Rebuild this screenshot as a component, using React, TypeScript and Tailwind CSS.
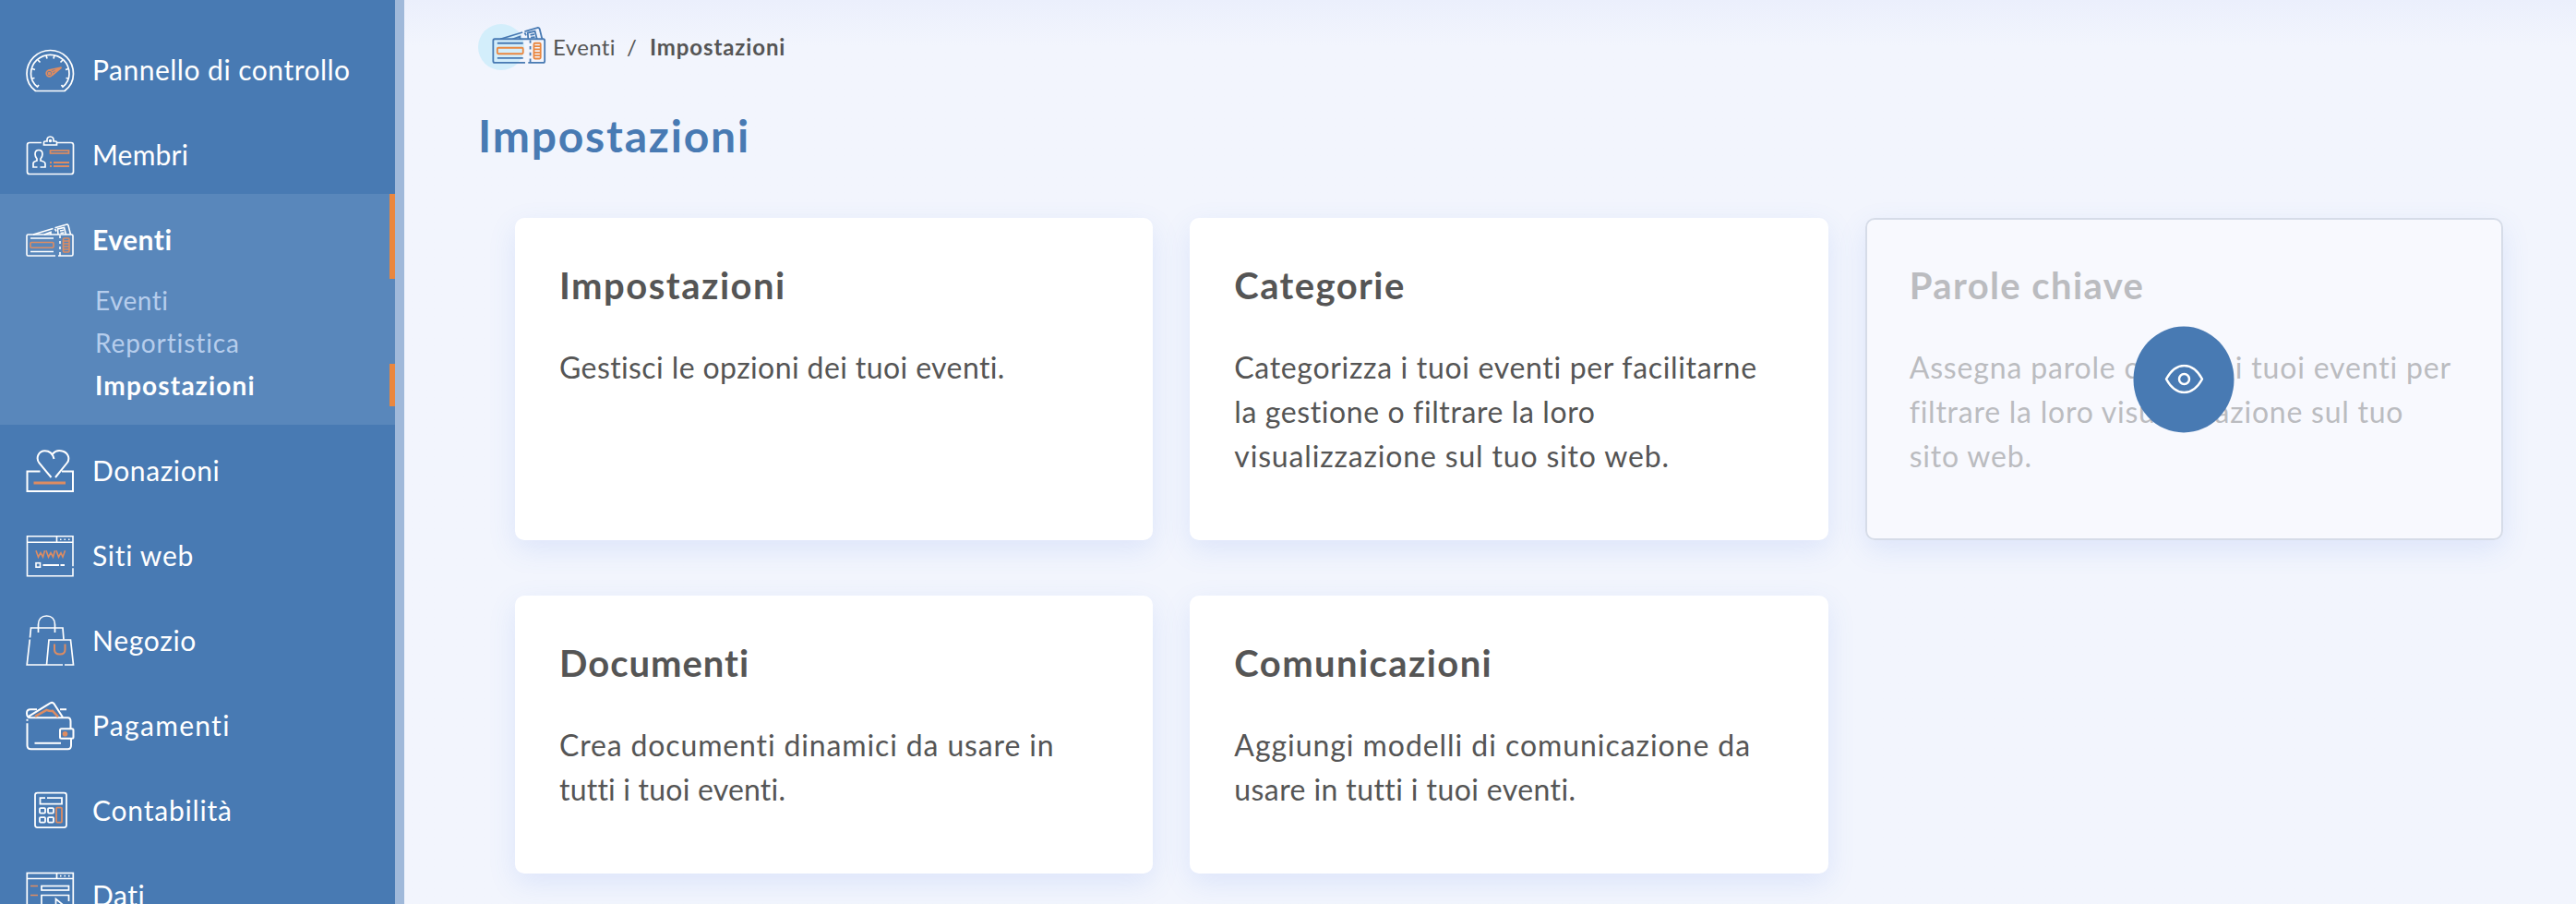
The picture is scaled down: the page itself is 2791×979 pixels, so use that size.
import React from 'react';

type IconProps = { className?: string };

type NavItem = {
  label: string;
  icon: React.FC<IconProps>;
  tracking: string;
  active?: boolean;
};

type CardLine = { text: string; tracking: string };

type CardData = {
  title: string;
  titleTracking: string;
  lines: CardLine[];
  hidden?: boolean;
};

const ORANGE = '#dd8c62';

const GaugeIcon: React.FC<IconProps> = ({ className }) => (
  <svg className={className} viewBox="0 -5 56 60" fill="none" stroke="#fff" strokeWidth="1.7">
    <path d="M10.5 51.5C4.5 47 1 40.5 1 33C1 18.5 12.5 7.5 26.5 7.5S51.5 18.5 51.5 33C51.5 40.5 48 47 42 51.5Z" />
    <path d="M14 45L12.5 47C8 43.5 5.5 38.5 5.5 33C5.5 21 15 12.3 26.5 12.3S47 21 47 33C47 38.5 44.5 43.5 40 47L38.5 45" />
    <path d="M22 13L23 16.5M31 13L30 16.5M13 18L15.5 20.5M40 18L37.5 20.5M7 27.5L10 28.5M46 27.5L43 28.5M6.5 38L9.5 37.5M46.500 38L43.5 37.5" />
    <g stroke={ORANGE}>
      <circle cx="25.5" cy="32.5" r="3.3" />
      <circle cx="25.5" cy="32.5" r="1" />
      <path d="M24.5 29L38.5 26L28.5 34.5M28 31L36 27.5" />
    </g>
  </svg>
);

const BadgeIcon: React.FC<IconProps> = ({ className }) => (
  <svg className={className} viewBox="0 -5.5 56 60" fill="none" stroke="#fff" strokeWidth="1.7">
    <path d="M17 15H4Q1.500 15 1.5 17.5V46.5Q1.500 49 4 49H49Q51.500 49 51.5 46.5V17.5Q51.500 15 49 15H34" />
    <path d="M19.5 17.5V14.5Q19.500 13.500 21 13.5H23C22.5 10 24 8.5 26.5 8.5S30.5 10 30 13.5H32Q33.500 13.500 33.5 14.5V17.5Z" />
    <circle cx="26.5" cy="13" r="0.9" />
    <path d="M12.5 41.5H8V37.5Q8 35.500 12 34.5V32.5Q10 30 10 27.5C10 24.5 11.5 23 14 23S18 24.5 18 27.5Q18 30 16 32.5V34.5Q21 35.500 21 38V41.5H15.5" />
    <g stroke={ORANGE}>
      <rect x="26.5" y="23.5" width="20" height="3" />
      <path d="M26 36.5H28M30 36.5H47M26 40.5H28M30 40.5H47" strokeWidth="2" />
    </g>
  </svg>
);

const TicketsIcon: React.FC<IconProps & { stroke?: string; accent?: string }> = ({
  className,
  stroke = '#fff',
  accent = ORANGE,
}) => (
  <svg className={className} viewBox="0 -2 56 60" fill="none" stroke={stroke} strokeWidth="1.6">
    <path d="M32 49H2.5Q1 49 1 47.5V27.5Q1 26 2.5 26H49.5Q51 26 51 27.5V47.5Q51 49 49.5 49H35" />
    <path d="M8 26L29.5 19.5M31.5 18.8L44.5 15Q45.500 15 46 16L48.5 26" />
    <path d="M20 26L27 23.5V26M31.5 20L33 22.5M35 26L34.5 20L41.5 18.5L43.5 26M37 22L41 21.3M37.5 24.5L41.5 24" />
    <path d="M5 30H30M5 44.5H30" />
    <path d="M37 27V30M37 33V36M37 39V42M37 45V49" />
    <g stroke={accent}>
      <rect x="5" y="34.5" width="25" height="5.8" rx="1" />
      <rect x="40.5" y="30" width="6.5" height="15" rx="1" />
      <path d="M40.5 33H47M40.5 36H47M40.5 39H47M40.5 42H47" />
    </g>
  </svg>
);

const DonationIcon: React.FC<IconProps> = ({ className }) => (
  <svg className={className} viewBox="0 -11.5 56 60" fill="none" stroke="#fff" strokeWidth="2">
    <path d="M15.5 23H1.5V44.5H51V23H39" />
    <path d="M27.5 29.500L14.5 14C10 7.5 14.5 0.8 20.5 0.8C25 0.8 29 3.5 30.5 9.5M29 4C32 0.5 36 0 39.5 1C45.5 2.5 48.5 9 44.5 14L32 29.5" />
    <path d="M8.5 35.5H43" stroke={ORANGE} strokeWidth="3" />
  </svg>
);

const WebsiteIcon: React.FC<IconProps> = ({ className }) => (
  <svg className={className} viewBox="0 -4.2 56 60" fill="none" stroke="#fff" strokeWidth="1.6">
    <path d="M51 41V8.5H1.5V51.5H51V43" />
    <path d="M1.5 15H51M33.5 8.5V15" />
    <path d="M37 12H38.5M41.5 12H43M46 12H47.5" />
    <rect x="11" y="37.5" width="4.5" height="4.5" />
    <path d="M18.5 39.8H36M37.5 39.8H42" strokeWidth="1.8" />
    <path
      d="M11 24L13.5 31L16 26.5L18.5 31L20.5 24M22 24L24.5 31L27 26.5L29.5 31L31.5 24M33 24L35.5 31L38 26.5L40 31L42.5 24"
      stroke={ORANGE}
    />
  </svg>
);

const BagsIcon: React.FC<IconProps> = ({ className }) => (
  <svg className={className} viewBox="0 -14.5 56 60" fill="none" stroke="#fff" strokeWidth="1.7">
    <path d="M41 18L40 5.5H5.5L4.5 16M4.3 18L1.2 45.5H40" />
    <path d="M13.5 10.500V2C13.5 -4 17 -7.5 22.5 -7.5S31.500 -4 31.500 2V10.500" />
    <path d="M42 45.5H51.5L48.5 18.5H25L22.5 45.5" />
    <path d="M31 23V29C31 32.5 33.5 34 37 34S42.5 32.5 42.5 29V23" stroke={ORANGE} strokeWidth="2" />
  </svg>
);

const WalletIcon: React.FC<IconProps> = ({ className }) => (
  <svg className={className} viewBox="0 -9.300 56 60" fill="none" stroke="#fff" strokeWidth="2">
    <path d="M49 39V46Q49 50 45.500 50H5.500Q1.500 50 1.500 46V22M1.500 19.500V17.500" />
    <path d="M12 7H5Q1 7 1 11Q1 16 5 16H45.5Q48.500 16 48.500 20V28M37 7H44" />
    <path d="M3 14.5L26.5 0Q29 -1.200 30.5 0.8L40 15.5" />
    <rect x="37" y="28" width="14.500" height="10.5" rx="1.5" />
    <path d="M9.5 43.5H38" />
    <path d="M10 14.500L22.5 7.5Q26 9 29 8.5L35 15" stroke={ORANGE} strokeWidth="2.5" />
    <circle cx="42.5" cy="33.5" r="2.8" fill={ORANGE} stroke="none" />
  </svg>
);

const CalculatorIcon: React.FC<IconProps> = ({ className }) => (
  <svg className={className} viewBox="0 -3.6 56 60" fill="none" stroke="#fff" strokeWidth="1.8">
    <rect x="10" y="11" width="34" height="37.5" rx="2.5" />
    <path d="M21 16.5H15.5V23H39V16.5H23" />
    <rect x="15" y="27.5" width="6" height="5.5" rx="1" />
    <rect x="24" y="27.5" width="6" height="5.5" rx="1" />
    <rect x="15" y="37.5" width="6" height="5.5" rx="1" />
    <rect x="24" y="37.5" width="6" height="5.5" rx="1" />
    <rect x="33" y="27" width="6" height="16" rx="1" stroke={ORANGE} />
  </svg>
);

const DataIcon: React.FC<IconProps> = ({ className }) => (
  <svg className={className} viewBox="0 -4 56 60" fill="none" stroke="#fff" strokeWidth="1.7">
    <rect x="1.3" y="5.5" width="50" height="50" />
    <path d="M1.5 11.5H51.5M33.5 5.5V11.5M37 8.700H38.5M41.5 8.7H43M46 8.7H47.5" />
    <rect x="17" y="19.5" width="29.5" height="4.5" />
    <path d="M17 50V29.5H46.5V36M32.5 46V33.5L44 43" />
    <path d="M5 19.5H13M5 29.5H13" stroke={ORANGE} />
  </svg>
);

const navItems: NavItem[] = [
  { label: 'Pannello di controllo', icon: GaugeIcon, tracking: 'tracking-[0.5px]' },
  { label: 'Membri', icon: BadgeIcon, tracking: 'tracking-[0.2px]' },
  { label: 'Eventi', icon: TicketsIcon, tracking: 'tracking-[0.5px]', active: true },
  { label: 'Donazioni', icon: DonationIcon, tracking: 'tracking-[0.6px]' },
  { label: 'Siti web', icon: WebsiteIcon, tracking: 'tracking-[0.7px]' },
  { label: 'Negozio', icon: BagsIcon, tracking: 'tracking-[0.7px]' },
  { label: 'Pagamenti', icon: WalletIcon, tracking: 'tracking-[1.3px]' },
  { label: 'Contabilità', icon: CalculatorIcon, tracking: 'tracking-[0.8px]' },
  { label: 'Dati', icon: DataIcon, tracking: 'tracking-[0.5px]' },
];

const subItems = [
  { label: 'Eventi', tracking: 'tracking-[0.5px]' },
  { label: 'Reportistica', tracking: 'tracking-[0.9px]' },
  { label: 'Impostazioni', tracking: 'tracking-[1.2px]', active: true },
];

const cards: CardData[] = [
  {
    title: 'Impostazioni',
    titleTracking: 'tracking-[1.5px]',
    lines: [{ text: 'Gestisci le opzioni dei tuoi eventi.', tracking: 'tracking-[0.4px]' }],
  },
  {
    title: 'Categorie',
    titleTracking: 'tracking-[1.4px]',
    lines: [
      { text: 'Categorizza i tuoi eventi per facilitarne', tracking: 'tracking-[0.67px]' },
      { text: 'la gestione o filtrare la loro', tracking: 'tracking-[0.6px]' },
      { text: 'visualizzazione sul tuo sito web.', tracking: 'tracking-[0.83px]' },
    ],
  },
  {
    title: 'Parole chiave',
    titleTracking: 'tracking-[1.4px]',
    hidden: true,
    lines: [
      { text: 'Assegna parole chiave ai tuoi eventi per', tracking: 'tracking-[0.83px]' },
      { text: 'filtrare la loro visualizzazione sul tuo', tracking: 'tracking-[0.76px]' },
      { text: 'sito web.', tracking: 'tracking-[0.8px]' },
    ],
  },
  {
    title: 'Documenti',
    titleTracking: 'tracking-[1px]',
    lines: [
      { text: 'Crea documenti dinamici da usare in', tracking: 'tracking-[0.86px]' },
      { text: 'tutti i tuoi eventi.', tracking: 'tracking-[0.2px]' },
    ],
  },
  {
    title: 'Comunicazioni',
    titleTracking: 'tracking-[1.4px]',
    lines: [
      { text: 'Aggiungi modelli di comunicazione da', tracking: 'tracking-[0.94px]' },
      { text: 'usare in tutti i tuoi eventi.', tracking: 'tracking-[0.4px]' },
    ],
  },
];

const Sidebar: React.FC = () => (
  <nav className="w-[438px] shrink-0 border-r-[10px] border-[#a0b9da] bg-[#487ab3] pt-[26px] text-white">
    {navItems.map((item) => {
      const Icon = item.icon;
      return (
        <div key={item.label} className={item.active ? 'bg-[#5987bb] pb-5' : ''}>
          <div className={`flex h-[92px] items-center pl-7 ${item.active ? 'border-r-[6px] border-[#ea873f]' : ''}`}>
            <Icon className="h-[60px] w-14 shrink-0 overflow-visible" />
            <span className={`ml-4 pt-1.5 text-[30px] ${item.tracking} ${item.active ? 'font-bold' : ''}`}>
              {item.label}
            </span>
          </div>
          {item.active &&
            subItems.map((sub) => (
              <div
                key={sub.label}
                className={`flex h-[46px] items-center pl-[103px] text-[28px] ${sub.tracking} ${
                  sub.active ? 'border-r-[6px] border-[#ea873f] font-bold text-white' : 'text-[#b6cdec]'
                }`}
              >
                {sub.label}
              </div>
            ))}
        </div>
      );
    })}
  </nav>
);

const Card: React.FC<{ card: CardData }> = ({ card }) => (
  <div
    className={`relative rounded-[10px] px-12 pb-[67px] shadow-[0_10px_30px_rgba(80,120,230,0.13)] ${
      card.hidden ? 'bg-[#f8f9fe] text-[#bbbcc0] ring-2 ring-[#d6dce8] ring-inset' : 'bg-white text-[#555]'
    }`}
  >
    <h2 className={`h-[138px] pt-[49px] text-[40px] leading-[48px] font-bold ${card.titleTracking}`}>{card.title}</h2>
    <div className="text-[32px] leading-[48px]">
      {card.lines.map((line) => (
        <p key={line.text} className={`whitespace-nowrap ${line.tracking}`}>
          {line.text}
        </p>
      ))}
    </div>
    {card.hidden && (
      <div className="absolute top-1/2 left-1/2 flex h-[115px] w-[109px] -translate-x-1/2 -translate-y-1/2 items-center justify-center rounded-[50%] bg-[#487ab3]">
        <svg className="h-8 w-[42px]" viewBox="0 0 42 32" fill="none" stroke="#fff" strokeWidth="2.5">
          <path d="M1.500 16C7 6 13 1.5 21 1.5S35 6 40.5 16C35 26 29 30.5 21 30.5S7 26 1.5 16Z" />
          <circle cx="21" cy="16" r="5.5" />
        </svg>
      </div>
    )}
  </div>
);

const App: React.FC = () => {
  return (
    <div className="flex h-[979px] w-[2791px] overflow-hidden bg-[#f2f5fd] font-['Lato','Liberation_Sans',sans-serif]">
      <Sidebar />
      <main className="flex-1 bg-linear-to-b from-[#ebeffc] to-[#f2f5fd] to-[50px] pl-20">
        <div className="flex h-[102px] items-center text-[24px] text-[#555]">
          <div className="relative h-[50px] w-[81px]">
            <div className="h-[50px] w-[50px] rounded-full bg-[#d3eefb]" />
            <TicketsIcon
              className="absolute -top-[15px] left-[15px] h-[67px] w-[63px] overflow-visible"
              stroke="#487ab3"
              accent="#ea873f"
            />
          </div>
          <span className="tracking-[0.4px]">Eventi</span>
          <span className="mr-3.5 ml-3">/</span>
          <span className="font-bold tracking-[0.9px]">Impostazioni</span>
        </div>
        <h1 className="flex h-[90px] items-center text-[48px] font-bold tracking-[1.8px] text-[#487ab3]">Impostazioni</h1>
        <div className="mt-11 ml-10 grid w-[2154px] grid-cols-3 gap-x-10 gap-y-[60px]">
          {cards.map((card) => (
            <Card key={card.title} card={card} />
          ))}
        </div>
      </main>
    </div>
  );
};

export default App;
